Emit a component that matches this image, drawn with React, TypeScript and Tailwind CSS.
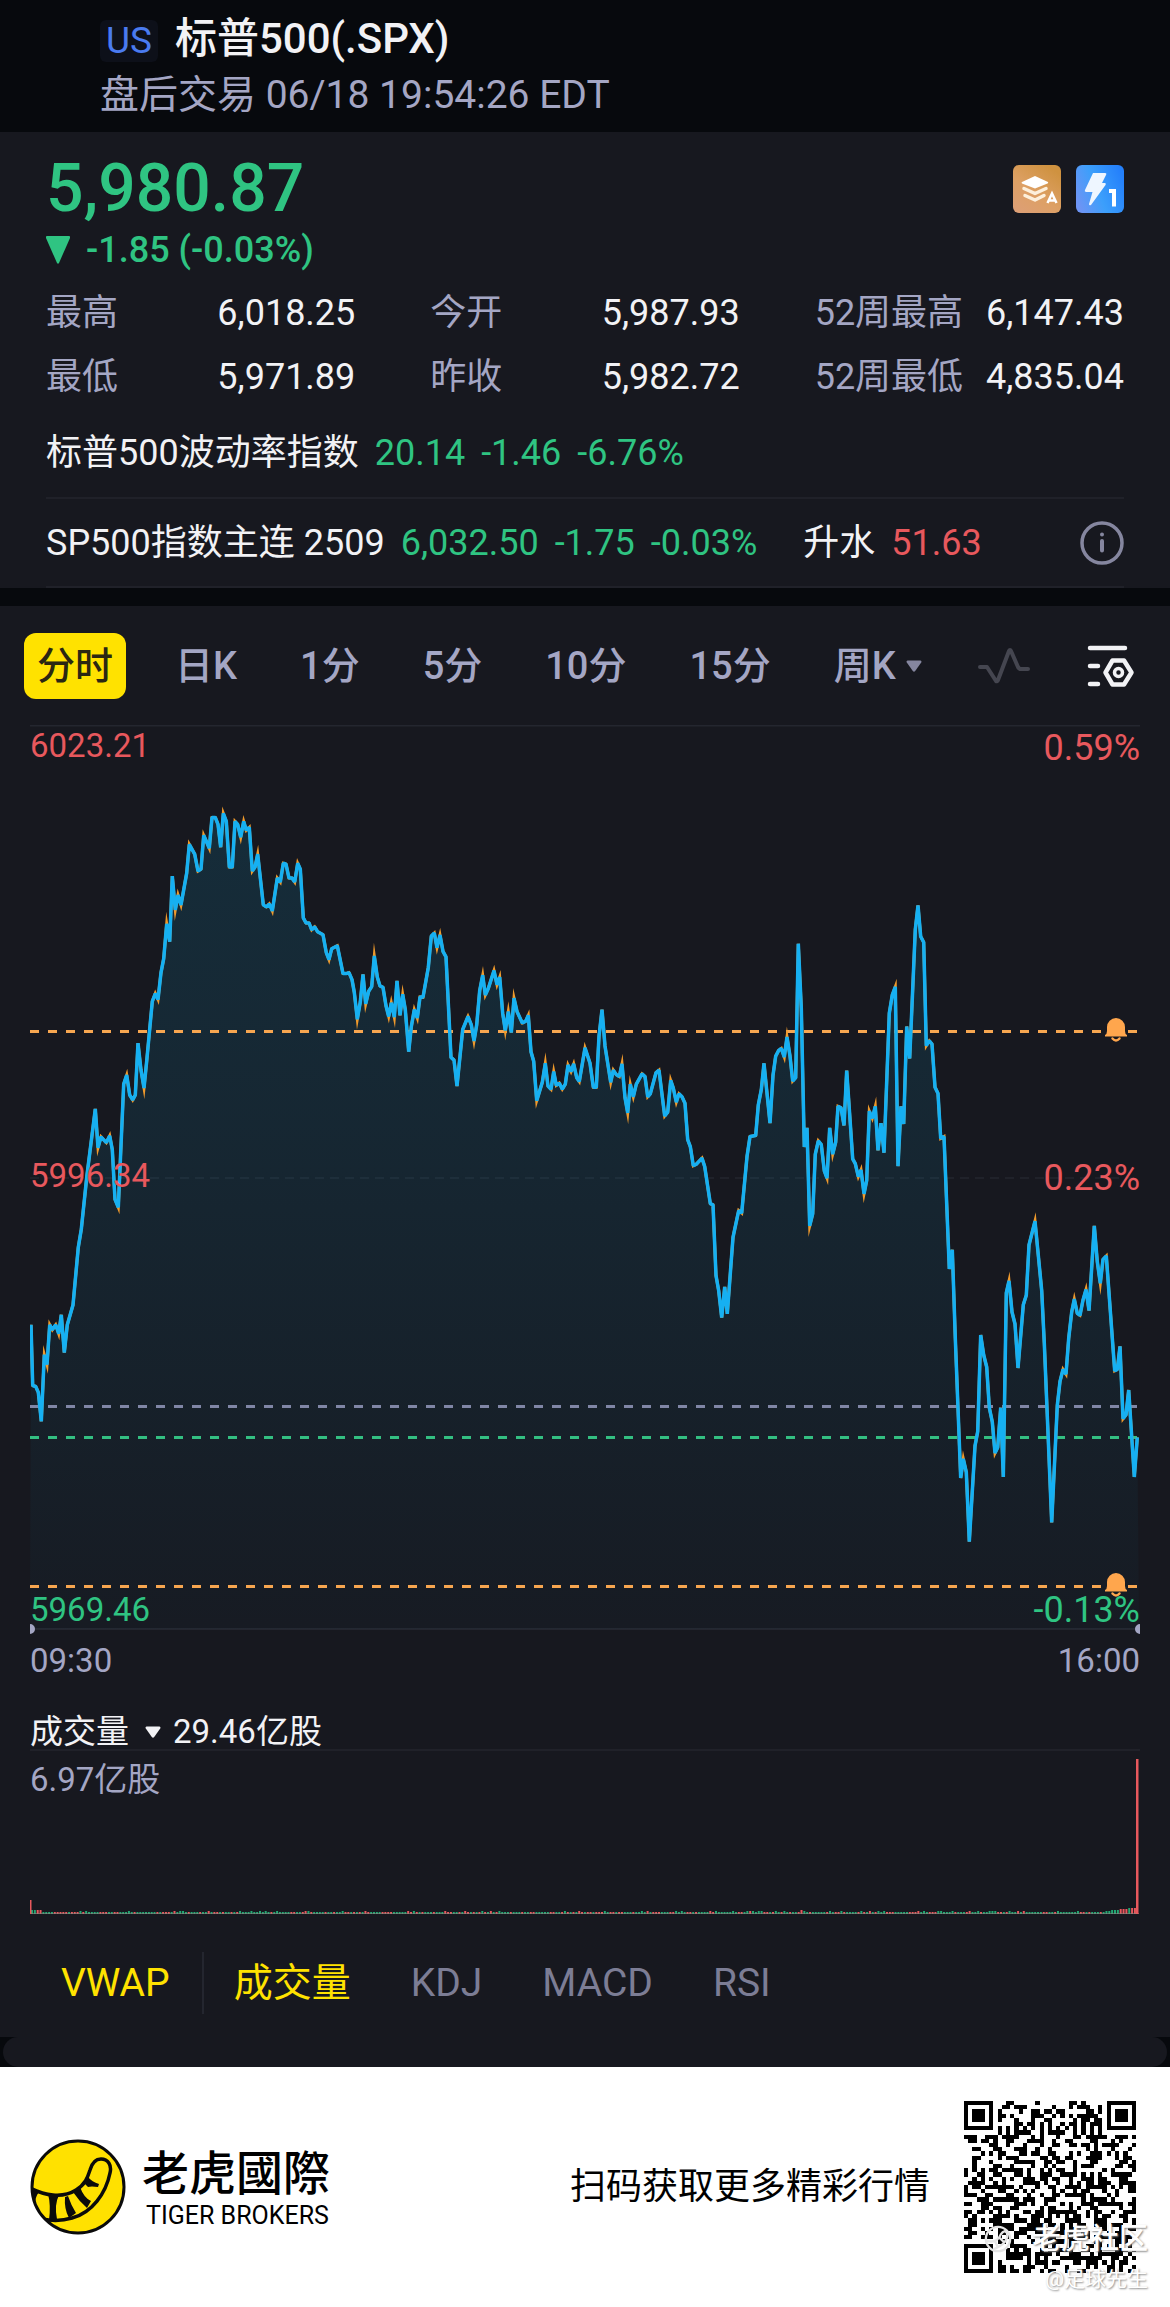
import React from "react";

type Segment = { x0: number; y0: number; kx: number; ky: number; pts: string };

// Intraday price samples, one block per part of the session, each on its own grid.
const SEGMENTS: Segment[] = [
  {
    x0: -30, y0: -25, kx: 3, ky: 2.0103,
    pts: "93,1256 98,1378 107,1380 115,1392 124,1450 133,1316 141,1336 149,1256 157,1266 167,1256 176,1274 184,1236 193,1312 202,1256 219,1216 235,1100 244,1064 260,960 286,822 294,900 303,878 319,890 329,876 337,904 345,1004 355,1020 371,772 380,754 389,794 398,804 406,794 414,690 423,744 432,780 440,726 457,606 466,590 474,602 483,548 491,520 500,450 509,486 517,354 526,422 534,392 543,412 560,348 568,290 584,310 594,344 603,340 611,272 628,298 636,236 646,236 654,250 662,296 670,228 679,244 688,336 697,336 705,244 713,250 722,276 731,244 739,262 748,256 757,344 765,336 773,310 790,412 799,416 808,410 817,424 832,358 841,366 850,328 858,330 867,358 876,358 884,366 893,328 901,340 910,438 918,448 927,448 935,462 944,456 953,466 969,472 979,508 987,522 995,500 1012,494 1029,550 1038,550 1047,548 1056,562",
  },
  {
    x0: 320, y0: 55, kx: 3, ky: 2.6133,
    pts: "13,555 22,625 31,580 39,508 47,585 56,552 65,540 73,460 82,515 90,538 99,542 108,590 116,618 124,582 133,620 141,525 150,615 158,560 166,600 176,710 184,645 193,600 202,622 210,567 219,568 235,490 244,408 253,400 261,438 270,405 279,448 288,462 303,725 312,732 321,800 338,652 354,618 364,640 372,682 380,640 389,550 398,510 406,562 415,545 432,498 441,535 449,515 458,610 466,655 475,605 484,660 492,570 501,605 517,635 527,630 535,615 543,710 551,735 560,838 577,790 586,740 594,800 603,808 611,762 619,798 628,792 637,808 646,795 654,745 663,762 671,742 680,778 688,788 705,700 720,740 730,803 739,803 747,670 756,600 765,695 782,790 790,758 799,770 808,775 816,742 825,830 833,870 841,795 850,828 859,795 876,768 885,775 893,828 901,820 918,765 927,758 944,878 953,868 962,785 970,805 979,842 987,820 996,828 1005,845 1013,940 1021,958 1030,1008 1039,1004 1056,988 1064,1010 1081,1107 1089,1110 1098,1295 1106,1335 1115,1405 1124,1325 1132,1395 1149,1195 1166,1125",
  },
  {
    x0: 710, y0: 135, kx: 3, ky: 2.0907,
    pts: "5,738 21,620 30,578 47,576 55,512 64,480 72,425 90,550 99,450 107,410 116,398 124,394 133,412 141,370 150,410 158,462 167,455 175,175 184,310 193,600 201,560 209,765 218,740 226,615 235,587 244,595 253,650 261,665 269,560 278,615 287,590 294,515 303,518 312,555 320,440 338,625 346,635 355,662 363,648 372,698 380,670 388,525 397,540 406,515 414,607 423,550 432,612 448,320 457,282 466,265 474,640 483,515 491,552 500,348 509,415 526,145 534,95 542,160 551,172 559,388 568,378 576,385 585,475 594,488 602,582 612,578 628,855 637,815 646,1000 662,1292 670,1252 679,1280 688,1425 705,1225 713,1195 722,993 731,1035 740,1060 748,1145 757,1175 765,1240 773,1228 782,1145 790,1290 799,905 807,880 816,945 825,970 834,1062 850,930 859,910 867,805 885,755 905,900 913,1010 935,1385 952,1140 960,1090 969,1065 978,1075 986,1000 995,945 1003,918 1012,948 1020,952 1029,920 1038,898 1047,942 1063,765 1072,840 1081,885 1089,835 1099,828 1124,1068 1132,1065 1140,1017 1149,1168 1158,1160 1166,1108 1183,1290 1192,1207",
  },
];

const LINE = SEGMENTS.flatMap((s) =>
  s.pts.split(" ").map((p) => {
    const [x, y] = p.split(",").map(Number);
    return `${(s.x0 + x / s.kx).toFixed(1)},${(s.y0 + y / s.ky).toFixed(1)}`;
  })
).join(" ");

function Bell({ x, y }: { x: number; y: number }) {
  return (
    <g transform={`translate(${x} ${y})`} fill="#ffa64d">
      <path d="M0 18.500v-1.500q2-1 2-4v-4a9 9 0 0 1 18 0v4q0 3 2 4v1.500z" />
      <path d="M7.500 20.500q3.500 4 7 0" fill="none" stroke="#ffa64d" strokeWidth="2.500" strokeLinecap="round" />
    </g>
  );
}

function PriceChart() {
  return (
    <div className="relative">
      <svg viewBox="0 0 1110 910" className="block w-full" role="img" aria-label="分时走势">
        <defs>
          <linearGradient id="area" x1="0" y1="80" x2="0" y2="904" gradientUnits="userSpaceOnUse">
            <stop offset="0" stopColor="#0cace0" stopOpacity="0.14" />
            <stop offset="0.400" stopColor="#0cace0" stopOpacity="0.1" />
            <stop offset="1" stopColor="#0cace0" stopOpacity="0.02" />
          </linearGradient>
        </defs>
        <path d="M0 0.500H1110M0 904H1110" stroke="#24262f" strokeWidth="2" fill="none" />
        <path d="M0 453H1110" stroke="#24262f" strokeWidth="1.500" strokeDasharray="9 6" fill="none" />
        <polygon points={`0,904 ${LINE} 1109,904`} fill="url(#area)" />
        <g fill="none" strokeWidth="3" strokeDasharray="9 9">
          <path d="M0 306.500H1110" stroke="#f7a650" />
          <path d="M0 681.500H1110" stroke="#8086a6" />
          <path d="M0 712.500H1110" stroke="#33bf82" />
          <path d="M0 861.500H1110" stroke="#f7a650" />
        </g>
        <polyline points={LINE} fill="none" stroke="#f09a2c" strokeWidth="3" strokeLinejoin="miter" strokeMiterlimit="9" />
        <polyline points={LINE} fill="none" stroke="#16b0f2" strokeWidth="3.500" strokeLinejoin="bevel" />
        <Bell x={1075} y={293} />
        <Bell x={1075} y={848} />
        <path d="M0 899a5 5 0 0 1 0 10zM1110 899a5 5 0 0 0 0 10z" fill="#a4a6c4" />
      </svg>
      <div className="absolute inset-x-0 top-0 flex items-start justify-between text-[#e8585d]">
        <span className="text-[33px] leading-[42px]">6023.21</span>
        <span className="text-[36px] leading-[46px]">0.59%</span>
      </div>
      <div className="absolute inset-x-0 top-1/2 flex -translate-y-1/2 items-start justify-between pb-1 text-[#e8585d]">
        <span className="text-[33px] leading-[42px]">5996.34</span>
        <span className="text-[36px] leading-[46px]">0.23%</span>
      </div>
      <div className="absolute inset-x-0 bottom-0 flex items-center justify-between leading-[50px] text-[#2fc482]">
        <span className="text-[33px]">5969.46</span>
        <span className="text-[36px]">-0.13%</span>
      </div>
    </div>
  );
}

const RED = "#e8585d";
const GREEN = "#22a873";

function VolumeChart() {
  let seed = 11;
  const bars = Array.from({ length: 388 }, (_, i) => {
    seed = (seed * 1103515245 + 12345) % 2147483648;
    const r = seed / 2147483648;
    let h = r > 0.85 ? 3 : 2;
    if (i < 4) h = 4;
    if (i === 270) h = 4;
    if (i > 376) h = 2 + Math.round((i - 374) / 3);
    return { i, h, color: (seed >> 8) % 5 < 2 ? RED : GREEN };
  });
  return (
    <svg viewBox="0 0 1110 164" className="block w-full" role="img" aria-label="成交量">
      {bars.map((b) => (
        <rect key={b.i} x={1 + b.i * 2.85} y={163 - b.h} width="2" height={b.h} fill={b.color} />
      ))}
      <path d="M0 162.500H1109" stroke="#8a8b84" strokeWidth="1" opacity="0.6" />
      <rect x="0" y="149" width="1.500" height="14" fill={RED} />
      <rect x="1106" y="8" width="2.500" height="155" fill={RED} />
    </svg>
  );
}

const QR_SIZE = 41;

function buildCode(): string {
  let seed = 20250618;
  const inBox = (r: number, c: number, top: number, left: number, n: number) =>
    r >= top && r < top + n && c >= left && c < left + n;
  let d = "";
  for (let r = 0; r < QR_SIZE; r++) {
    for (let c = 0; c < QR_SIZE; c++) {
      seed = (seed * 1103515245 + 12345) % 2147483648;
      let on = seed / 2147483648 > 0.5;
      if (r === 6) on = c % 2 === 0;
      if (c === 6) on = r % 2 === 0;
      if (inBox(r, c, 32, 32, 5)) {
        const k = Math.max(Math.abs(r - 34), Math.abs(c - 34));
        on = k !== 1;
      }
      for (const [t, l] of [[0, 0], [0, QR_SIZE - 7], [QR_SIZE - 7, 0]]) {
        if (inBox(r, c, t - 1, l - 1, 9)) {
          const k = Math.max(Math.abs(r - t - 3), Math.abs(c - l - 3));
          on = k === 3 || k < 2;
        }
      }
      if (on) d += `M${c} ${r}h1v1h-1z`;
    }
  }
  return d;
}

const QR_PATH = buildCode();

function Caret({ className }: { className: string }) {
  return (
    <svg viewBox="0 0 16 12" className={className} aria-hidden="true">
      <path d="M1.500 0.500h13q1.500 0.500 0.700 2l-6 8.500q-1.200 1.300-2.400 0l-6-8.500q-0.800-1.500 0.700-2z" fill="currentColor" />
    </svg>
  );
}

function TigerLogo() {
  return (
    <svg viewBox="0 0 96 96" className="size-24 shrink-0" aria-hidden="true">
      <defs>
        <clipPath id="disc"><circle cx="48" cy="48" r="46" /></clipPath>
      </defs>
      <circle cx="48" cy="48" r="46" fill="#ffe100" />
      <g clipPath="url(#disc)" fill="none" stroke="#0b0b0b" strokeWidth="3.500">
        <path d="M0 49C14 56 32 60 46 51C56 45 58 37 60 31C62 24 66 20 71 20C78 20 82 26 80 34C76 54 62 74 42 79C32 82 22 82 12 80" />
        <g fill="#0b0b0b" stroke="none">
          <path d="M0 48L9 53Q5 58 5 66L0 60z" />
          <path d="M18 55L29 56Q24 66 27 80L19 81Q21 66 18 55z" />
          <path d="M35 58L38 57Q41 66 46 74L39 79Q34 70 35 58z" />
          <path d="M43 53L50 48Q54 59 61 62L57 69Q49 62 43 53z" />
          <path d="M54 44L58 38Q62 43 69 45L68 48Q61 47 58 48z" />
        </g>
      </g>
      <circle cx="48" cy="48" r="46" fill="none" stroke="#0b0b0b" strokeWidth="3" />
    </svg>
  );
}

const STATS = [
  ["最高", "6,018.25"], ["今开", "5,987.93"], ["52周最高", "6,147.43"],
  ["最低", "5,971.89"], ["昨收", "5,982.72"], ["52周最低", "4,835.04"],
];

const PERIODS = ["日K", "1分", "5分", "10分", "15分"];

export default function App() {
  return (
    <main
      lang="zh-CN"
      className="min-w-[1080px] bg-[#17181f] text-[36px] text-[#f2f2f5] font-[Roboto,'Noto_Sans_CJK_SC',sans-serif]"
    >
      <header className="bg-[#07090d] px-[100px] pt-[13px] pb-[11px]">
        <div className="flex items-center gap-[17px]">
          <span className="mt-1 rounded-md bg-[#0d1019] px-1.5 text-[37px] leading-[42px] text-[#4a7bf0]">US</span>
          <h1 className="text-[42px] leading-[52px] font-medium">标普500(.SPX)</h1>
        </div>
        <p className="mt-1 text-[39px] leading-[52px] text-[#a4a6c4]">盘后交易 06/18 19:54:26 EDT</p>
      </header>

      <section className="px-[46px] pt-[19px]">
        <div className="flex items-start justify-between">
          <div className="text-[#2fc482]">
            <p className="text-[66px] leading-[76px] font-medium">5,980.87</p>
            <p className="flex items-center gap-[16px] leading-[46px] font-medium">
              <svg viewBox="0 0 24 28" className="h-7 w-6" aria-hidden="true">
                <path d="M1 0h22q1.500 0 1 2L13 27q-1 1.500-2 0L0 2q-0.500-2 1-2z" fill="currentColor" />
              </svg>
              -1.85 (-0.03%)
            </p>
          </div>
          <div className="flex gap-[15px] pt-[14px]">
            <svg viewBox="0 0 48 48" className="size-12" aria-label="A" role="img">
              <defs>
                <linearGradient id="gold" x1="0" y1="1" x2="0.700" y2="0">
                  <stop offset="0" stopColor="#dd9f78" />
                  <stop offset="0.500" stopColor="#dda064" />
                  <stop offset="1" stopColor="#cf9240" />
                </linearGradient>
              </defs>
              <rect width="48" height="48" rx="6" fill="url(#gold)" />
              <path d="M22 11L35 17Q35.500 18 34.500 18.500L22 23.500L9 18.500Q8 17.500 9 17z" fill="#fff" />
              <path d="M11 23.500L22 28.500L33 23.500M12 30.500L22 35L31 30.500" fill="none" stroke="#fdf0dc" strokeWidth="3.500" strokeLinecap="round" strokeLinejoin="round" />
              <path d="M34.500 38L39 28.500L43.500 38M36 35.500H42" fill="none" stroke="#fff" strokeWidth="2.500" />
            </svg>
            <svg viewBox="0 0 48 48" className="size-12" aria-label="1" role="img">
              <defs>
                <linearGradient id="azure" x1="0" y1="0.700" x2="1" y2="0.300">
                  <stop offset="0" stopColor="#6d94f4" />
                  <stop offset="0.450" stopColor="#3c9ffb" />
                  <stop offset="1" stopColor="#2480fb" />
                </linearGradient>
              </defs>
              <rect width="48" height="48" rx="6" fill="url(#azure)" />
              <path d="M17 8H29Q31 8 30 10L26 18H29Q30.500 18.500 29.500 20L15 40Q13 41 13 39L16.500 27H10Q8 26.500 9 25z" fill="#eef6ff" />
              <path d="M33 26h5v15.500" fill="none" stroke="#fff" strokeWidth="4" />
            </svg>
          </div>
        </div>

        <dl className="mt-[8px] grid grid-cols-3 gap-x-[75px] leading-[64px]">
          {STATS.map(([label, value]) => (
            <div key={label} className="flex justify-between whitespace-nowrap">
              <dt className="text-[#a4a6c4]">{label}</dt>
              <dd>{value}</dd>
            </div>
          ))}
        </dl>

        <div className="flex items-center gap-4 border-b-2 border-[#202129] pt-[12px] pb-[12px] leading-[64px]">
          <span>标普500波动率指数</span>
          <span className="text-[#2fc482]">20.14</span>
          <span className="text-[#2fc482]">-1.46</span>
          <span className="text-[#2fc482]">-6.76%</span>
        </div>
        <div className="flex items-center gap-4 border-b-2 border-[#202129] pt-[12px] pb-[11px] leading-[64px] whitespace-nowrap">
          <span>SP500指数主连 2509</span>
          <span className="text-[#2fc482]">6,032.50</span>
          <span className="text-[#2fc482]">-1.75</span>
          <span className="text-[#2fc482]">-0.03%</span>
          <span className="ml-[30px]">升水</span>
          <span className="text-[#e8585d]">51.63</span>
          <button type="button" aria-label="说明" className="ml-auto">
            <svg viewBox="0 0 44 44" className="size-11" fill="none" stroke="#85869f" strokeWidth="4" strokeLinecap="round">
              <circle cx="22" cy="22" r="20" strokeWidth="3.500" />
              <path d="M22 20v9.500M22 13.500v0.100" />
            </svg>
          </button>
        </div>
      </section>

      <div className="h-[18px] bg-[#07090d]" />

      <nav className="flex items-center justify-between pt-[27px] pr-[35px] pb-[26px] pl-6 text-[38px] leading-[66px] font-medium whitespace-nowrap text-[#a4a6c4]">
        <div className="flex items-center gap-[63px]">
          <button type="button" className="-mr-3.5 rounded-xl bg-[#ffe200] px-[13px] text-[#2b2712]">分时</button>
          {PERIODS.map((p) => (
            <button key={p} type="button">{p}</button>
          ))}
          <button type="button" className="flex items-center gap-2.5">
            周K
            <Caret className="h-3 w-4 text-[#85869f]" />
          </button>
        </div>
        <div className="flex items-center gap-14">
          <button type="button" aria-label="走势">
            <svg viewBox="0 0 54 38" className="h-[38px] w-[54px]" fill="none" stroke="#454650" strokeWidth="4" strokeLinecap="round" strokeLinejoin="round">
              <path d="M3 20H10L19 34Q20 35 21 33L32 4Q33 2 34 4L41 20Q42 22 44 22H51" />
            </svg>
          </button>
          <button type="button" aria-label="设置">
            <svg viewBox="0 0 48 42" className="h-[42px] w-12" fill="none" stroke="#f2f2f5" strokeWidth="4.500" strokeLinecap="round" strokeLinejoin="round">
              <path d="M3 3H38M3 21H11M3 39H11" />
              <path d="M25.500 15.500H37L44.500 27.500L37 39.500H25.500L18.500 27.500z" />
              <circle cx="31.500" cy="27.500" r="4" strokeWidth="3.500" />
            </svg>
          </button>
        </div>
      </nav>

      <section className="px-[30px]">
        <PriceChart />
        <div className="flex justify-between text-[33px] leading-[52px] text-[#a4a6c4]">
          <span>09:30</span>
          <span>16:00</span>
        </div>
        <div className="mt-7 flex items-center gap-4 border-b-2 border-[#202129] text-[33px] leading-[34px]">
          <button type="button" className="flex items-center gap-4">
            成交量
            <Caret className="h-3 w-4" />
          </button>
          <span className="-ml-1">29.46亿股</span>
        </div>
        <div className="relative">
          <VolumeChart />
          <span className="absolute top-1 left-0 text-[33px] leading-[50px] text-[#a4a6c4]">6.97亿股</span>
        </div>
      </section>

      <nav className="flex items-center px-[61px] pt-[37px] pb-[23px] text-[39px] leading-[62px] text-[#7c7d95]">
        <button type="button" className="border-r-2 border-[#24262f] pr-8 text-[#ffe200]">VWAP</button>
        <button type="button" className="ml-[30px] text-[#ffe200]">成交量</button>
        <button type="button" className="ml-[60px]">KDJ</button>
        <button type="button" className="ml-[60px]">MACD</button>
        <button type="button" className="ml-[60px]">RSI</button>
      </nav>

      <div className="bg-[#07090d] px-[3px]">
        <div className="h-[30px] rounded-[22px] bg-[#17181f]" />
      </div>

      <footer className="relative flex items-center bg-white px-[30px] pt-[34px] pb-[34px] text-black">
        <TigerLogo />
        <div className="ml-4 flex flex-col pt-1">
          <span className="font-[Roboto,'Noto_Sans_CJK_TC',sans-serif] text-[47px] leading-[54px] font-medium">老虎國際</span>
          <span className="pl-1 text-[25px] leading-[30px]">TIGER BROKERS</span>
        </div>
        <span className="ml-auto">扫码获取更多精彩行情</span>
        <svg viewBox="0 0 41 41" className="mr-1 ml-[34px] size-[172px]" shapeRendering="crispEdges" role="img" aria-label="二维码">
          <path d={QR_PATH} fill="#000" />
        </svg>
        <div className="absolute right-[22px] bottom-[10px] flex flex-col items-end text-white [text-shadow:1px_1px_2px_#888]">
          <span className="flex items-center gap-5 text-[29px] leading-[44px] font-medium">
            <svg viewBox="0 0 30 30" className="size-7" fill="none" stroke="#e5e5e5" strokeWidth="2.500">
              <circle cx="15" cy="15" r="13" />
              <path d="M3 17Q14 20 18 10Q22 4 25 9Q26 20 10 26M12 18l3 6M17 14l4 4" />
            </svg>
            老虎社区
          </span>
          <span className="text-[21px] leading-[36px]">@足球先生</span>
        </div>
      </footer>
    </main>
  );
}
